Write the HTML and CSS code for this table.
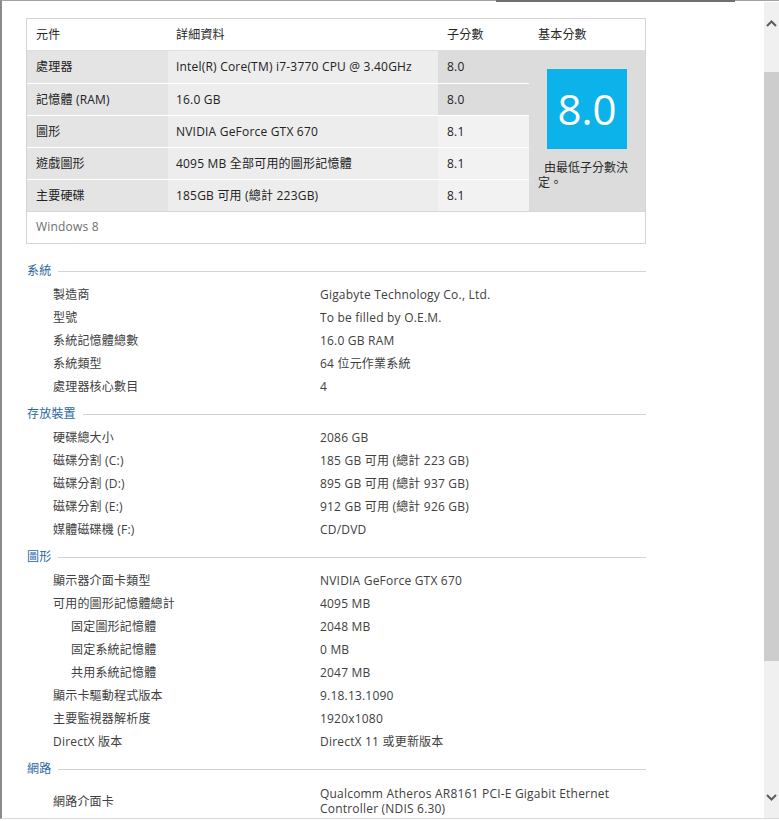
FILE: index.html
```html
<!DOCTYPE html>
<html lang="zh-Hant">
<head>
<meta charset="utf-8">
<title>系統資訊</title>
<link rel="stylesheet" href="styles.css">
</head>
<body>
<div class="window">
  <div class="topbar"><div class="topbar-seg"></div></div>
  <div class="main">
    <div class="content">
      <div class="score-table">
        <div class="cell head">元件</div>
        <div class="cell head c2">詳細資料</div>
        <div class="cell head">子分數</div>
        <div class="cell head">基本分數</div>

        <div class="base">
          <div class="score-box">8.0</div>
          <div class="score-note">由最低子分數決定。</div>
        </div>

        <div class="cell c1">處理器</div>
        <div class="cell c2">Intel(R) Core(TM) i7-3770 CPU @ 3.40GHz</div>
        <div class="cell c3 low">8.0</div>

        <div class="cell c1 sep">記憶體 (RAM)</div>
        <div class="cell c2 sep">16.0 GB</div>
        <div class="cell c3 low sep">8.0</div>

        <div class="cell c1 sep">圖形</div>
        <div class="cell c2 sep">NVIDIA GeForce GTX 670</div>
        <div class="cell c3 sep">8.1</div>

        <div class="cell c1 sep">遊戲圖形</div>
        <div class="cell c2 sep">4095 MB 全部可用的圖形記憶體</div>
        <div class="cell c3 sep">8.1</div>

        <div class="cell c1 sep">主要硬碟</div>
        <div class="cell c2 sep">185GB 可用 (總計 223GB)</div>
        <div class="cell c3 sep">8.1</div>

        <div class="foot">Windows 8</div>
      </div>

      <div class="details">
        <section class="group">
          <h2 class="group-title"><span>系統</span><i class="rule"></i></h2>
          <div class="row"><span class="label">製造商</span><span class="value">Gigabyte Technology Co., Ltd.</span></div>
          <div class="row"><span class="label">型號</span><span class="value">To be filled by O.E.M.</span></div>
          <div class="row"><span class="label">系統記憶體總數</span><span class="value">16.0 GB RAM</span></div>
          <div class="row"><span class="label">系統類型</span><span class="value">64 位元作業系統</span></div>
          <div class="row"><span class="label">處理器核心數目</span><span class="value">4</span></div>
        </section>

        <section class="group">
          <h2 class="group-title"><span>存放裝置</span><i class="rule"></i></h2>
          <div class="row"><span class="label">硬碟總大小</span><span class="value">2086 GB</span></div>
          <div class="row"><span class="label">磁碟分割 (C:)</span><span class="value">185 GB 可用 (總計 223 GB)</span></div>
          <div class="row"><span class="label">磁碟分割 (D:)</span><span class="value">895 GB 可用 (總計 937 GB)</span></div>
          <div class="row"><span class="label">磁碟分割 (E:)</span><span class="value">912 GB 可用 (總計 926 GB)</span></div>
          <div class="row"><span class="label">媒體磁碟機 (F:)</span><span class="value">CD/DVD</span></div>
        </section>

        <section class="group">
          <h2 class="group-title"><span>圖形</span><i class="rule"></i></h2>
          <div class="row"><span class="label">顯示器介面卡類型</span><span class="value">NVIDIA GeForce GTX 670</span></div>
          <div class="row"><span class="label">可用的圖形記憶體總計</span><span class="value">4095 MB</span></div>
          <div class="row"><span class="label sub">固定圖形記憶體</span><span class="value">2048 MB</span></div>
          <div class="row"><span class="label sub">固定系統記憶體</span><span class="value">0 MB</span></div>
          <div class="row"><span class="label sub">共用系統記憶體</span><span class="value">2047 MB</span></div>
          <div class="row"><span class="label">顯示卡驅動程式版本</span><span class="value">9.18.13.1090</span></div>
          <div class="row"><span class="label">主要監視器解析度</span><span class="value">1920x1080</span></div>
          <div class="row"><span class="label">DirectX 版本</span><span class="value">DirectX 11 或更新版本</span></div>
        </section>

        <section class="group">
          <h2 class="group-title"><span>網路</span><i class="rule"></i></h2>
          <div class="row tall"><span class="label">網路介面卡</span><span class="value">Qualcomm Atheros AR8161 PCI-E Gigabit Ethernet Controller (NDIS 6.30)</span></div>
        </section>
      </div>
    </div>

    <div class="scrollbar">
      <div class="sb-btn">
        <svg width="11" height="7" viewBox="0 0 11 7"><path d="M1 6 L5.5 1.5 L10 6" fill="none" stroke="#5c5c5c" stroke-width="2"/></svg>
      </div>
      <div class="sb-track"><div class="sb-thumb"></div></div>
      <div class="sb-btn">
        <svg width="11" height="7" viewBox="0 0 11 7"><path d="M1 1 L5.5 5.5 L10 1" fill="none" stroke="#5c5c5c" stroke-width="2"/></svg>
      </div>
    </div>
  </div>
</div>
</body>
</html>
```

FILE: styles.css
```css
* { box-sizing: border-box; }

html, body {
  margin: 0;
  padding: 0;
  background: #ffffff;
}

body {
  width: 779px;
  height: 821px;
  overflow: hidden;
  font-family: "Open Sans", "Noto Sans CJK TC", sans-serif;
  font-size: 12px;
  letter-spacing: 0.2px;
  color: #222222;
}

.window {
  height: 819px;
  border-top: 1px solid #a2a2a2;
  border-left: 2px solid #8a8a8a;
  border-bottom: 1px solid #d9d9d9;
  display: flex;
  flex-direction: column;
}

.topbar {
  height: 1px;
  display: flex;
}

.topbar-seg {
  margin-top: -1px;
  margin-left: 494px;
  width: 239px;
  height: 2px;
  background: #6f6f6f;
}

.main {
  flex: 1;
  min-height: 0;
  display: flex;
}

.content {
  flex: 1;
  min-width: 0;
  overflow: hidden;
  padding: 16px 0 0 24px;
}

/* ---------- score table ---------- */
.score-table {
  width: 620px;
  border: 1px solid #d4d4d4;
  display: grid;
  grid-template-columns: 141px 270px 91px 116px;
  grid-template-rows: 32px repeat(5, 32px) 32px;
}

.cell {
  padding-left: 9px;
  line-height: 31px;
  white-space: nowrap;
  overflow: hidden;
}

.cell.c2 { padding-left: 8px; }

.cell.head {
  background: #ffffff;
  border-bottom: 1px solid #dedede;
  color: #262626;
}

.cell.c1 { background: #e4e4e4; }
.cell.c2:not(.head) { background: #ededed; }
.cell.c3 { background: #f2f2f2; }
.cell.c3.low { background: #dcdcdc; }

.cell.sep { border-top: 1px solid #ffffff; }

.base {
  grid-column: 4;
  grid-row: 2 / span 5;
  background: #dcdcdc;
  padding: 18px 9px 0 9px;
}

.score-box {
  margin-left: 9px;
  width: 80px;
  height: 80px;
  background: #0cb2ea;
  color: #ffffff;
  font-family: "Open Sans", sans-serif;
  font-weight: 400;
  font-size: 42px;
  letter-spacing: 0;
  line-height: 80px;
  text-align: center;
}

.score-note {
  margin-top: 11px;
  line-height: 15px;
  text-indent: 6px;
  letter-spacing: 0;
  color: #2a2a2a;
}

.foot {
  grid-column: 1 / -1;
  border-top: 1px solid #d6d6d6;
  padding-left: 9px;
  line-height: 30px;
  color: #6e6e6e;
}

/* ---------- details ---------- */
.details {
  width: 620px;
  padding-top: 11px;
}

.group { margin-top: 2px; }

.group-title {
  margin: 0;
  height: 26px;
  display: flex;
  align-items: center;
  font-size: 12px;
  font-weight: normal;
  color: #2a68a0;
  padding-left: 1px;
}

.group-title .rule {
  flex: 1;
  height: 1px;
  margin-left: 7px;
  margin-top: 2px;
  background: #d3d3d3;
}

.row {
  display: grid;
  grid-template-columns: 294px 1fr;
  align-items: center;
  min-height: 23px;
  line-height: 23px;
  color: #404040;
}

.row .label { padding-left: 27px; }
.row .label.sub { padding-left: 45px; }

.row.tall {
  padding: 5px 0;
  line-height: 15px;
}

/* ---------- scrollbar ---------- */
.scrollbar {
  width: 15px;
  background: #f0f0f0;
  display: flex;
  flex-direction: column;
}

.sb-btn {
  height: 42px;
  display: flex;
  align-items: center;
  justify-content: center;
}

.sb-track {
  flex: 1;
  padding-top: 28px;
}

.sb-thumb {
  height: 589px;
  background: #cdcdcd;
}
```
